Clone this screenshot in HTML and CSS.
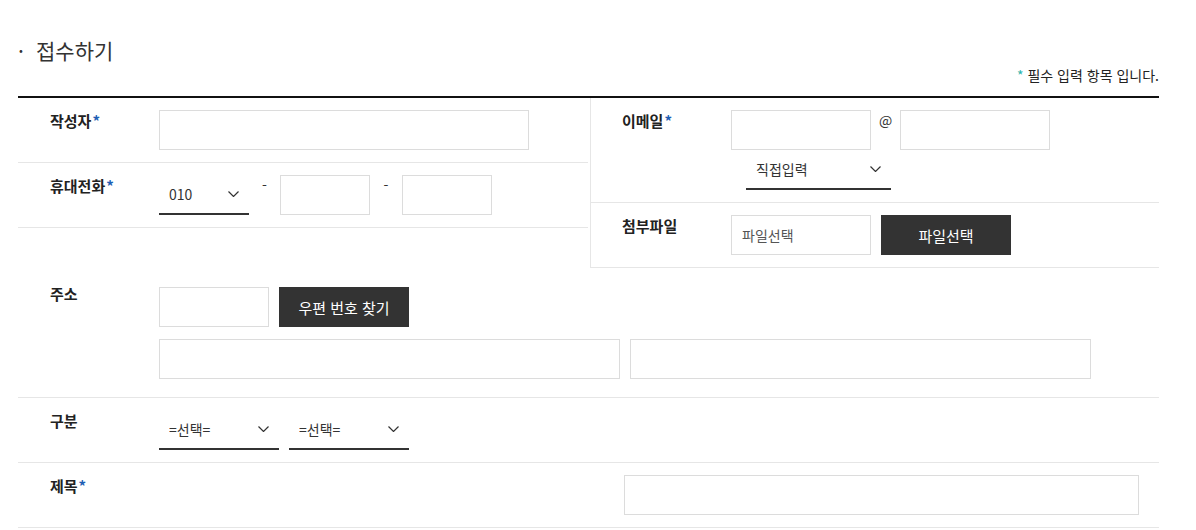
FILE: index.html
```html
<!DOCTYPE html>
<html lang="ko">
<head>
    <meta charset="UTF-8">
    <meta name="viewport" content="width=device-width, initial-scale=1.0">
    <title>접수하기</title>
    <link rel="stylesheet" href="styles.css">
</head>
<body>

<div class="wrap">
    <h3 class="title"><span class="dot">·</span>접수하기</h3>
    <p class="note"><span class="mark">*</span> 필수 입력 항목 입니다.</p>

    <form class="apply">
        <div class="top">
            <div class="col">
                <div class="row">
                    <label class="label" for="writer">작성자<span class="req">*</span></label>
                    <div class="fields">
                        <input type="text" id="writer" class="input w370">
                    </div>
                </div>
                <div class="row">
                    <label class="label" for="phone1">휴대전화<span class="req">*</span></label>
                    <div class="fields line">
                        <div class="select w90">
                            <select id="phone1">
                                <option>010</option>
                                <option>011</option>
                                <option>016</option>
                                <option>017</option>
                            </select>
                            <svg class="arrow" width="11" height="6" viewBox="0 0 11 6"><path d="M0.5 0.5 L5.5 5.5 L10.5 0.5" fill="none" stroke="#333" stroke-width="1.2"/></svg>
                        </div>
                        <span class="sep w31">-</span>
                        <input type="text" class="input w90">
                        <span class="sep w32">-</span>
                        <input type="text" class="input w90">
                    </div>
                </div>
            </div>

            <div class="col side">
                <div class="row">
                    <label class="label" for="email1">이메일<span class="req">*</span></label>
                    <div class="fields stack">
                        <div class="line">
                            <input type="text" id="email1" class="input w140">
                            <span class="sep w29">@</span>
                            <input type="text" class="input w150">
                        </div>
                        <div class="select w145 indent">
                            <select>
                                <option>직접입력</option>
                                <option>naver.com</option>
                                <option>gmail.com</option>
                            </select>
                            <svg class="arrow" width="11" height="6" viewBox="0 0 11 6"><path d="M0.5 0.5 L5.5 5.5 L10.5 0.5" fill="none" stroke="#333" stroke-width="1.2"/></svg>
                        </div>
                    </div>
                </div>
                <div class="row">
                    <label class="label" for="file">첨부파일</label>
                    <div class="fields line gap10">
                        <input type="text" id="file" class="input w140" placeholder="파일선택" readonly>
                        <button type="button" class="btn">파일선택</button>
                    </div>
                </div>
            </div>
        </div>

        <div class="row addr">
            <label class="label" for="zip">주소</label>
            <div class="fields stack gap12">
                <div class="line gap10">
                    <input type="text" id="zip" class="input w110">
                    <button type="button" class="btn">우편 번호 찾기</button>
                </div>
                <div class="line gap10">
                    <input type="text" class="input w461">
                    <input type="text" class="input w461">
                </div>
            </div>
        </div>

        <div class="row">
            <label class="label" for="type1">구분</label>
            <div class="fields line gap10">
                <div class="select w120">
                    <select id="type1">
                        <option>=선택=</option>
                    </select>
                    <svg class="arrow" width="11" height="6" viewBox="0 0 11 6"><path d="M0.5 0.5 L5.5 5.5 L10.5 0.5" fill="none" stroke="#333" stroke-width="1.2"/></svg>
                </div>
                <div class="select w120">
                    <select>
                        <option>=선택=</option>
                    </select>
                    <svg class="arrow" width="11" height="6" viewBox="0 0 11 6"><path d="M0.5 0.5 L5.5 5.5 L10.5 0.5" fill="none" stroke="#333" stroke-width="1.2"/></svg>
                </div>
            </div>
        </div>

        <div class="row">
            <label class="label" for="subject">제목<span class="req">*</span></label>
            <div class="fields line end">
                <input type="text" id="subject" class="input w515">
            </div>
        </div>
    </form>
</div>

</body>
</html>
```

FILE: styles.css
```css
body {
    margin: 0;
    font-family: "Noto Sans CJK KR", "Noto Sans", sans-serif;
    font-size: 14px;
    color: #333;
    background: #fff;
}

.wrap {
    width: 1141px;
    margin-left: 18px;
}

.title {
    margin: 36px 0 0;
    font-size: 21px;
    line-height: 28px;
    font-weight: 400;
    color: #333;
}

.title .dot {
    display: inline-block;
    width: 18px;
}

.note {
    margin: 2px 0 12px;
    text-align: right;
    font-size: 14px;
    line-height: 18px;
    color: #222;
}

.note .mark {
    color: #2bb3ad;
}

.apply {
    border-top: 2px solid #111;
}

.top {
    display: grid;
    grid-template-columns: 570px 1fr;
    column-gap: 2px;
    align-items: start;
}

.side {
    border-left: 1px solid #e6e6e6;
}

.row {
    display: grid;
    grid-template-columns: 141px 1fr;
    padding: 12px 0;
    border-bottom: 1px solid #e6e6e6;
}

.side .row {
    grid-template-columns: 140px 1fr;
}

.label {
    padding: 1px 0 0 32px;
    font-size: 15px;
    line-height: 20px;
    font-weight: 700;
    color: #222;
}

.side .label {
    padding-left: 31px;
}

.req {
    color: #1f5fb4;
    margin-left: 1px;
}

.addr {
    padding: 15px 0 18px;
}

.addr .fields {
    padding-top: 4px;
}

.fields {
    display: flex;
}

.stack {
    flex-direction: column;
}

.line {
    display: flex;
    align-items: flex-start;
}

.gap10 {
    gap: 10px;
}

.gap12 {
    gap: 12px;
}

.end {
    justify-content: flex-end;
    padding-right: 20px;
}

.input {
    box-sizing: border-box;
    height: 40px;
    margin: 0;
    padding: 0 10px;
    border: 1px solid #dcdcdc;
    background: #fff;
    font-family: inherit;
    font-size: 14px;
    color: #333;
    outline: none;
}

.input::placeholder {
    color: #555;
}

.sep {
    font-size: 14px;
    line-height: 20px;
    text-align: center;
    color: #333;
}

.select {
    position: relative;
    height: 40px;
}

.select select {
    appearance: none;
    -webkit-appearance: none;
    box-sizing: border-box;
    width: 100%;
    height: 40px;
    margin: 0;
    padding: 0 10px;
    border: 0;
    border-bottom: 2px solid #333;
    border-radius: 0;
    background: #fff;
    font-family: inherit;
    font-size: 14px;
    color: #333;
    outline: none;
}

.select .arrow {
    position: absolute;
    right: 10px;
    top: 50%;
    margin-top: -4px;
    pointer-events: none;
}

.indent {
    margin-left: 15px;
}

.btn {
    width: 130px;
    height: 40px;
    margin: 0;
    border: 0;
    background: #333;
    color: #fff;
    font-family: inherit;
    font-size: 15px;
    font-weight: 400;
    cursor: pointer;
}

.w29 { width: 29px; }
.w31 { width: 31px; }
.w32 { width: 32px; }
.w90 { width: 90px; }
.w110 { width: 110px; }
.w120 { width: 120px; }
.w140 { width: 140px; }
.w145 { width: 145px; }
.w150 { width: 150px; }
.w370 { width: 370px; }
.w461 { width: 461px; }
.w515 { width: 515px; }
```
